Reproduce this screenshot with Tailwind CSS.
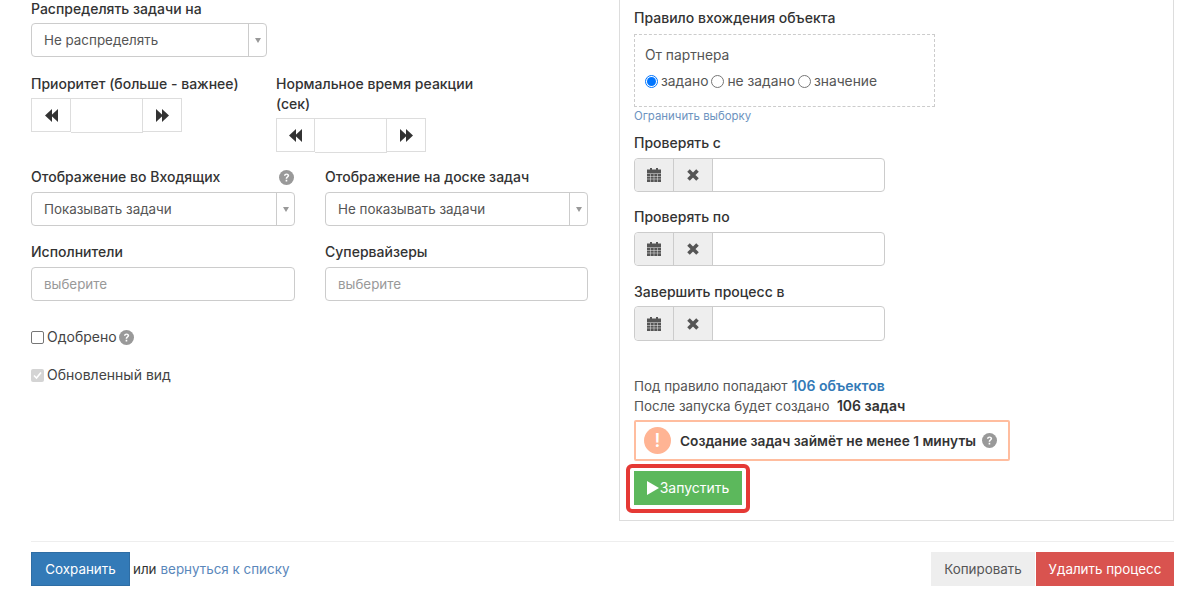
<!DOCTYPE html>
<html lang="ru">
<head>
<meta charset="UTF-8">
<title>Процесс</title>
<script src="https://cdn.jsdelivr.net/npm/@tailwindcss/browser@4"></script>
</head>
<body class="bg-white h-[615px] overflow-hidden font-['Inter','Noto_Sans',sans-serif] text-[13.4px] leading-5 text-[#333]">
<div class="px-[25px] pl-[31px]">
  <div class="flex h-[521px]">
    <!-- левая колонка -->
    <div class="w-[557px] -mt-px">
      <div class="font-medium text-[14px]">Распределять задачи на</div>
      <div class="mt-[4px] w-[236px] h-[34px] border border-[#ccc] rounded flex items-center justify-between text-[#555]">
        <span class="pl-3">Не распределять</span>
        <span class="w-[18px] h-full border-l border-[#ccc] flex items-center justify-center"><svg width="6" height="5" viewBox="0 0 6 5"><polygon points="0,0 6,0 3,5" fill="#999"/></svg></span>
      </div>
      <div class="mt-[17px] flex">
        <div class="w-[245px]">
          <div class="font-medium text-[14px]">Приоритет (больше - важнее)</div>
          <div class="mt-[4px] flex h-[34px] w-[151px]">
            <span class="w-10 border border-[#ddd] flex items-center justify-center"><svg width="13" height="13" viewBox="0 0 13 13" fill="#333"><polygon points="7,0 0,6.500 7,13"/><polygon points="13,0 6,6.500 13,13"/></svg></span>
            <span class="w-[72px] h-[35px] border border-l-0 border-[#ddd]"></span>
            <span class="w-[39px] border border-l-0 border-[#ddd] flex items-center justify-center"><svg width="13" height="13" viewBox="0 0 13 13" fill="#333"><polygon points="0,0 7,6.500 0,13"/><polygon points="6,0 13,6.500 6,13"/></svg></span>
          </div>
        </div>
        <div class="w-[205px]">
          <div class="font-medium text-[14px]">Нормальное время реакции (сек)</div>
          <div class="mt-[4px] flex h-[34px] w-[150px]">
            <span class="w-[39px] border border-[#ddd] flex items-center justify-center"><svg width="13" height="13" viewBox="0 0 13 13" fill="#333"><polygon points="7,0 0,6.500 7,13"/><polygon points="13,0 6,6.500 13,13"/></svg></span>
            <span class="w-[72px] h-[35px] border border-l-0 border-[#ddd]"></span>
            <span class="w-[39px] border border-l-0 border-[#ddd] flex items-center justify-center"><svg width="13" height="13" viewBox="0 0 13 13" fill="#333"><polygon points="0,0 7,6.500 0,13"/><polygon points="6,0 13,6.500 6,13"/></svg></span>
          </div>
        </div>
      </div>
      <div class="mt-[15px] grid grid-cols-[264px_263px] gap-x-[30px] gap-y-[16px]">
        <div>
          <div class="font-medium text-[14px] flex justify-between pr-[1px]">Отображение во Входящих
            <svg class="mt-[3px]" width="15" height="15" viewBox="0 0 14 14"><circle cx="7" cy="7" r="7" fill="#999"/><path d="M4.600 5.300C4.800 3.900 5.800 3.200 7.100 3.200c1.400 0 2.400.9 2.400 2 0 1.800-1.900 1.700-1.900 3H6.200c0-2 1.800-2 1.800-3 0-.5-.4-.8-.9-.8-.6 0-.9.3-1.100 1zM6.200 9.200h1.500v1.500H6.200z" fill="#fff"/></svg>
          </div>
          <div class="mt-[5px] h-[34px] border border-[#ccc] rounded flex items-center justify-between text-[#555]">
            <span class="pl-3">Показывать задачи</span>
            <span class="w-[18px] h-full border-l border-[#ccc] flex items-center justify-center"><svg width="6" height="5" viewBox="0 0 6 5"><polygon points="0,0 6,0 3,5" fill="#999"/></svg></span>
          </div>
        </div>
        <div>
          <div class="font-medium text-[14px]">Отображение на доске задач</div>
          <div class="mt-[5px] h-[34px] border border-[#ccc] rounded flex items-center justify-between text-[#555]">
            <span class="pl-3">Не показывать задачи</span>
            <span class="w-[18px] h-full border-l border-[#ccc] flex items-center justify-center"><svg width="6" height="5" viewBox="0 0 6 5"><polygon points="0,0 6,0 3,5" fill="#999"/></svg></span>
          </div>
        </div>
        <div>
          <div class="font-medium text-[14px]">Исполнители</div>
          <div class="mt-[5px] h-[34px] border border-[#ccc] rounded flex items-center pl-3 pb-px text-[#999]">выберите</div>
        </div>
        <div>
          <div class="font-medium text-[14px]">Супервайзеры</div>
          <div class="mt-[5px] h-[34px] border border-[#ccc] rounded flex items-center pl-3 pb-px text-[#999]">выберите</div>
        </div>
      </div>
      <div class="mt-[26px] flex items-center text-[#444] text-[14px]">
        <span class="w-[13px] h-[13px] border border-[#767676] rounded-[2px] mr-[3px]"></span>Одобрено
        <svg class="ml-[2px]" width="15" height="15" viewBox="0 0 14 14"><circle cx="7" cy="7" r="7" fill="#999"/><path d="M4.600 5.300C4.800 3.900 5.800 3.200 7.100 3.200c1.400 0 2.400.9 2.400 2 0 1.800-1.900 1.700-1.900 3H6.200c0-2 1.800-2 1.800-3 0-.5-.4-.8-.9-.8-.6 0-.9.3-1.100 1zM6.200 9.200h1.500v1.500H6.200z" fill="#fff"/></svg>
      </div>
      <div class="mt-[18px] flex items-center text-[#444] text-[14px]">
        <span class="w-[13px] h-[13px] bg-[#d4d4d4] rounded-[2px] mr-[3px] flex items-center justify-center"><svg width="9" height="9" viewBox="0 0 9 9"><path d="M1 4.500 3.500 7 8 1.500" fill="none" stroke="#fff" stroke-width="1.600"/></svg></span>Обновленный вид
      </div>
    </div>
    <!-- правая панель -->
    <div class="ml-[31px] w-[555px] border-x border-b border-[#ddd] pl-[14px] pt-2">
      <div class="font-medium text-[14px]">Правило вхождения объекта</div>
      <div class="mt-[6px] w-[301px] h-[73px] border border-dashed border-[#ccc] pl-[10px] pt-[10px] text-[#555] text-[13.800px]">
        <div>От партнера</div>
        <div class="mt-[6px] flex items-center">
          <span class="w-[13px] h-[13px] rounded-full border border-[#0075ff] flex items-center justify-center mr-[3px]"><span class="w-[9px] h-[9px] rounded-full bg-[#0075ff]"></span></span>задано
          <span class="w-[13px] h-[13px] rounded-full border border-[#767676] ml-[3px] mr-[3px]"></span>не задано
          <span class="w-[13px] h-[13px] rounded-full border border-[#767676] ml-[3px] mr-[3px]"></span>значение
        </div>
      </div>
      <div class="text-[11.400px] leading-4 text-[#6d93c0] mt-[1px]">Ограничить выборку</div>
      <div class="font-medium text-[14px] mt-[9px]">Проверять с</div>
      <div class="mt-[5px] w-[251px] h-[34px] border border-[#ccc] rounded flex">
        <span class="w-[39px] bg-[#eee] border-r border-[#ccc] rounded-l flex items-center justify-center"><svg width="14" height="14" viewBox="0 0 14 14" fill="#555"><path d="M0 1.500h14v3.500H0zM3 0h2v2H3zM9 0h2v2H9zM0 5.500h14V14H0z"/><path d="M0 8.500h14M0 11h14M3.500 6v8M7 6v8M10.500 6v8" stroke="#eee" stroke-width=".5"/></svg></span>
        <span class="w-[39px] bg-[#eee] border-r border-[#ccc] flex items-center justify-center"><svg width="12" height="12" viewBox="0 0 12 12"><path d="M1.500 1.500 10.500 10.500M10.500 1.500 1.500 10.500" stroke="#555" stroke-width="3.600"/></svg></span>
      </div>
      <div class="font-medium text-[14px] mt-[15px]">Проверять по</div>
      <div class="mt-[5px] w-[251px] h-[34px] border border-[#ccc] rounded flex">
        <span class="w-[39px] bg-[#eee] border-r border-[#ccc] rounded-l flex items-center justify-center"><svg width="14" height="14" viewBox="0 0 14 14" fill="#555"><path d="M0 1.500h14v3.500H0zM3 0h2v2H3zM9 0h2v2H9zM0 5.500h14V14H0z"/><path d="M0 8.500h14M0 11h14M3.500 6v8M7 6v8M10.500 6v8" stroke="#eee" stroke-width=".5"/></svg></span>
        <span class="w-[39px] bg-[#eee] border-r border-[#ccc] flex items-center justify-center"><svg width="12" height="12" viewBox="0 0 12 12"><path d="M1.500 1.500 10.500 10.500M10.500 1.500 1.500 10.500" stroke="#555" stroke-width="3.600"/></svg></span>
      </div>
      <div class="font-medium text-[14px] mt-[16px]">Завершить процесс в</div>
      <div class="mt-[4px] w-[251px] h-[35px] border border-[#ccc] rounded flex">
        <span class="w-[39px] bg-[#eee] border-r border-[#ccc] rounded-l flex items-center justify-center"><svg width="14" height="14" viewBox="0 0 14 14" fill="#555"><path d="M0 1.500h14v3.500H0zM3 0h2v2H3zM9 0h2v2H9zM0 5.500h14V14H0z"/><path d="M0 8.500h14M0 11h14M3.500 6v8M7 6v8M10.500 6v8" stroke="#eee" stroke-width=".5"/></svg></span>
        <span class="w-[39px] bg-[#eee] border-r border-[#ccc] flex items-center justify-center"><svg width="12" height="12" viewBox="0 0 12 12"><path d="M1.500 1.500 10.500 10.500M10.500 1.500 1.500 10.500" stroke="#555" stroke-width="3.600"/></svg></span>
      </div>
      <div class="mt-[35px] text-[#555]">Под правило попадают <span class="font-semibold text-[14px] text-[#337ab7]">106 объектов</span></div>
      <div class="text-[#555]">После запуска будет создано&nbsp; <span class="font-semibold text-[14px] text-[#333]">106 задач</span></div>
      <div class="mt-1 w-[376px] h-[41px] border-2 border-[#ffbd9f] rounded-[2px] flex items-center pl-[8px] font-semibold text-[13.700px]">
        <span class="w-[27px] h-[27px] rounded-full bg-[#ffb494] text-white text-[18px] flex items-center justify-center mr-[9px]">!</span>
        Создание задач займёт не менее 1 минуты
        <svg class="ml-[6px]" width="15" height="15" viewBox="0 0 14 14"><circle cx="7" cy="7" r="7" fill="#999"/><path d="M4.600 5.300C4.800 3.900 5.800 3.200 7.100 3.200c1.400 0 2.400.9 2.400 2 0 1.800-1.900 1.700-1.900 3H6.200c0-2 1.800-2 1.800-3 0-.5-.4-.8-.9-.8-.6 0-.9.3-1.100 1zM6.200 9.200h1.500v1.500H6.200z" fill="#fff"/></svg>
      </div>
      <div class="relative mt-[10px] w-[108px] h-[34px] bg-[#5cb85c] text-white text-[14px] flex items-center justify-center">
        <svg class="mr-px" width="12" height="14" viewBox="0 0 12 14"><polygon points="0,0 12,7 0,14" fill="#fff"/></svg>Запустить
        <span class="absolute -left-[8px] -top-[7px] w-[124px] h-[49px] border-4 border-[#e53935] rounded-[6px]"></span>
      </div>
    </div>
  </div>
  <!-- нижняя панель -->
  <div class="mt-5 border-t border-[#eee] pt-[10px] flex justify-between items-center w-[1143px]">
    <div class="flex items-center">
      <span class="w-[99px] h-[34px] bg-[#337ab7] border border-[#2e6da4] text-white flex items-center justify-center">Сохранить</span>
      <span class="ml-[3px]">или</span>
      <span class="ml-[4px] text-[#5a87bb]">вернуться к списку</span>
    </div>
    <div class="flex">
      <span class="w-[104px] h-[34px] bg-[#eee] text-[#555] flex items-center justify-center">Копировать</span>
      <span class="ml-px w-[138px] h-[34px] bg-[#d9534f] text-white flex items-center justify-center">Удалить процесс</span>
    </div>
  </div>
</div>
</body>
</html>
